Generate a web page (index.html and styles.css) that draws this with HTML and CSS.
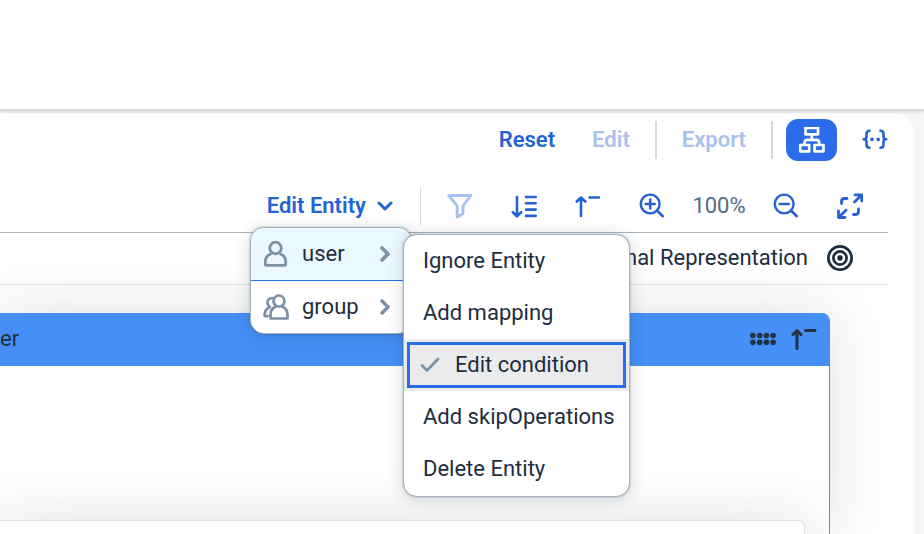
FILE: index.html
```html
<!DOCTYPE html>
<html lang="en">
<head>
<meta charset="utf-8">
<meta name="viewport" content="width=device-width, initial-scale=1">
<title>Edit Entity</title>
<link rel="stylesheet" href="styles.css">
</head>
<body>
<header class="topbar"></header>
<main class="panel">
  <div class="toolbar actions">
    <button class="text-button" type="button">Reset</button>
    <button class="text-button" type="button" disabled>Edit</button>
    <span class="separator strong"></span>
    <button class="text-button" type="button" disabled>Export</button>
    <span class="separator strong"></span>
    <button class="view-button selected" type="button" aria-label="Graphical view">
      <svg class="icon" viewBox="0 0 26 26"><g fill="none" stroke="currentColor" stroke-width="2.700" stroke-linejoin="round"><rect x="6.500" y="0.800" width="12.500" height="6.500"/><rect x="1.200" y="18" width="9" height="6.300"/><rect x="15.500" y="18" width="9" height="6.300"/><path d="M12.800 7.300v5.500M5.500 18v-2.200q0-3 3-3h8.700q3 0 3 3V18"/></g></svg>
    </button>
    <button class="view-button code" type="button" aria-label="JSON view">
      <svg class="icon" viewBox="0 0 26 26"><path d="M7.500 3.800C5.500 3.800 4.500 5 4.500 7v2.500C4.500 11.500 3.500 12.300 1.700 12.300c1.800 0 2.800 1 2.800 2.700V17.500c0 2 1 3.200 3 3.200M18.500 3.800c2 0 3 1.200 3 3.200v2.500c0 2 1 2.800 2.800 2.800-1.800 0-2.800 1-2.800 2.700V17.500c0 2-1 3.200-3 3.200" fill="none" stroke="currentColor" stroke-width="2.600" stroke-linecap="round" stroke-linejoin="round"/><circle cx="10" cy="12.400" r="1.800" fill="currentColor"/><circle cx="16.200" cy="12.400" r="1.800" fill="currentColor"/></svg>
    </button>
  </div>

  <div class="toolbar tools">
    <div class="entity">
      <button class="text-button entity-button" type="button" aria-haspopup="menu" aria-expanded="true">Edit Entity
        <svg class="caret" viewBox="0 0 16 10"><path d="M2 2l6 6 6-6" fill="none" stroke="currentColor" stroke-width="3" stroke-linecap="round" stroke-linejoin="round"/></svg>
      </button>
      <ul class="menu entity-menu">
        <li>
          <button class="menu-item active" type="button">
            <svg class="icon" viewBox="0 0 26 26"><g fill="none" stroke="currentColor" stroke-width="2.800" stroke-linejoin="round"><circle cx="12.500" cy="7" r="5.800"/><path d="M8.500 12.500C4.500 14 2.300 17 2.300 20.500V23.500q0 .8.800.8h18.800q.8 0 .8-.8v-3c0-3.500-2.200-6.500-6.200-8"/></g></svg>
            <span class="label">user</span>
            <svg class="arrow" viewBox="0 0 12 18"><path d="M3 3l6 6-6 6" fill="none" stroke="currentColor" stroke-width="3.600" stroke-linecap="round" stroke-linejoin="round"/></svg>
          </button>
        </li>
        <li>
          <button class="menu-item" type="button">
            <svg class="icon" viewBox="0 0 26 26"><g fill="none" stroke="currentColor" stroke-width="2.700" stroke-linejoin="round" stroke-linecap="round"><circle cx="16" cy="7" r="5.500"/><path d="M13 12.500C9.500 14 7.500 17 7.500 20.500V24q0 .5.500.5h16q.5 0 .5-.5v-3.500c0-3.500-2-6.500-5.500-8M9.500 4C6 4 4.500 6.500 4.500 8.500c0 2 1 3.500 2.500 4.500C3 15 1.500 17.500 1.500 21q0 1.200 1 1.200h2"/></g></svg>
            <span class="label">group</span>
            <svg class="arrow" viewBox="0 0 12 18"><path d="M3 3l6 6-6 6" fill="none" stroke="currentColor" stroke-width="3.600" stroke-linecap="round" stroke-linejoin="round"/></svg>
          </button>
        </li>
      </ul>
      <ul class="menu action-menu">
        <li><button class="menu-item" type="button">Ignore Entity</button></li>
        <li><button class="menu-item" type="button">Add mapping</button></li>
        <li>
          <button class="menu-item focused" type="button">
            <svg class="check" viewBox="0 0 20 16"><path d="M2 8.500L7 13.500 18 2" fill="none" stroke="currentColor" stroke-width="2.800" stroke-linecap="round" stroke-linejoin="round"/></svg>
            Edit condition
          </button>
        </li>
        <li><button class="menu-item" type="button">Add skipOperations</button></li>
        <li><button class="menu-item" type="button">Delete Entity</button></li>
      </ul>
    </div>
    <span class="separator"></span>
    <button class="icon-button" type="button" aria-label="Filter" disabled>
      <svg class="icon" viewBox="0 0 26 26"><path d="M1.800 2.500h22L16 13v7.500L10.200 24V13z" fill="none" stroke="currentColor" stroke-width="2.900" stroke-linejoin="round"/></svg>
    </button>
    <button class="icon-button" type="button" aria-label="Expand all">
      <svg class="icon" viewBox="0 0 26 26"><path d="M6 4v19M1.800 19.300l4.200 4 4.200-4M15 4h9.700M15 10.300h9.700M15 16.600h9.700M15 22.900h9.700" fill="none" stroke="currentColor" stroke-width="2.600" stroke-linecap="round" stroke-linejoin="round"/></svg>
    </button>
    <button class="icon-button" type="button" aria-label="Collapse all">
      <svg class="icon" viewBox="0 0 26 26"><path d="M6 23V4.500M1.800 8.500L6 4.500 10.200 8.500M14.500 4.500h9.500" fill="none" stroke="currentColor" stroke-width="2.600" stroke-linecap="round" stroke-linejoin="round"/></svg>
    </button>
    <button class="icon-button" type="button" aria-label="Zoom in">
      <svg class="icon" viewBox="0 0 26 26"><path d="M18 17.500l5.800 5.700M11.200 6.500v9M6.700 11h9" fill="none" stroke="currentColor" stroke-width="2.600" stroke-linecap="round"/><circle cx="11.200" cy="11" r="9.400" fill="none" stroke="currentColor" stroke-width="2.400"/></svg>
    </button>
    <span class="zoom-level">100%</span>
    <button class="icon-button" type="button" aria-label="Zoom out">
      <svg class="icon" viewBox="0 0 26 26"><path d="M18 17.500l5.800 5.700M6.700 11h9" fill="none" stroke="currentColor" stroke-width="2.600" stroke-linecap="round"/><circle cx="11.200" cy="11" r="9.400" fill="none" stroke="currentColor" stroke-width="2.400"/></svg>
    </button>
    <button class="icon-button" type="button" aria-label="Full screen">
      <svg class="icon" viewBox="0 0 26 26"><path d="M18 1.800h6.800V8M24.500 2l-7 7M8 24.500H1.500V18M1.800 24.200L9 17.200M4.500 10.500V8.500q0-3 3-3h2.500M21.500 16v2.500q0 3-3 3H16.500" fill="none" stroke="currentColor" stroke-width="2.800" stroke-linecap="round" stroke-linejoin="round"/></svg>
    </button>
  </div>

  <div class="view-title">
    <span>nal Representation</span>
    <svg class="icon" viewBox="0 0 26 26"><g fill="none" stroke="currentColor"><circle cx="13" cy="13" r="11.600" stroke-width="2.700"/><circle cx="13" cy="13" r="6.600" stroke-width="2.700"/></g><circle cx="13" cy="13" r="2.700" fill="currentColor"/></svg>
  </div>

  <section class="card">
    <header class="card-header">
      <span class="card-name">er</span>
      <svg class="icon" viewBox="0 0 26 26"><g fill="currentColor"><circle cx="2.900" cy="9.500" r="2.800"/><circle cx="9.700" cy="9.500" r="2.800"/><circle cx="16.400" cy="9.500" r="2.800"/><circle cx="23.100" cy="9.500" r="2.800"/><circle cx="2.900" cy="16.300" r="2.800"/><circle cx="9.700" cy="16.300" r="2.800"/><circle cx="16.400" cy="16.300" r="2.800"/><circle cx="23.100" cy="16.300" r="2.800"/></g></svg>
      <svg class="icon" viewBox="0 0 26 26"><path d="M6 22.500V4.500M2 8.500L6 4.500 10 8.500M14.500 4.500h9.500" fill="none" stroke="currentColor" stroke-width="3" stroke-linecap="round" stroke-linejoin="round"/></svg>
    </header>
    <div class="card-body">
      <div class="inner-card"></div>
    </div>
  </section>
</main>
</body>
</html>
```

FILE: styles.css
```css
* {
  box-sizing: border-box;
}

body {
  margin: 0;
  height: 100vh;
  display: flex;
  flex-direction: column;
  overflow: hidden;
  background: #f5f6f7;
  color: #1d2d3e;
  font: 22px/28px Roboto, "Noto Sans", sans-serif;
}

button {
  margin: 0;
  padding: 0;
  border: 0;
  background: none;
  color: #2563d4;
  font: inherit;
}

button:disabled {
  color: #a9c1ee;
}

svg {
  display: block;
  flex: none;
}

.icon {
  width: 26px;
  height: 26px;
}

.topbar {
  position: relative;
  flex: none;
  height: 111px;
  background: #fff;
  border-bottom: 2px solid #d9d9db;
  box-shadow: 0 1px 3px rgba(34, 53, 72, 0.16);
}

.panel {
  flex: 1;
  min-height: 0;
  display: flex;
  flex-direction: column;
  margin: 2px 10px 0 0;
  background: #fff;
  border-radius: 0 20px 0 0;
}

.toolbar {
  flex: none;
  display: flex;
  align-items: center;
  justify-content: flex-end;
  gap: 12px;
  margin-right: 26px;
}

.actions {
  gap: 13px;
  height: 54px;
  margin-bottom: 13px;
}

.tools {
  height: 53px;
  padding-right: 12px;
  border-bottom: 1px solid #a8b2bd;
}

.text-button {
  padding: 0 12px;
  font-weight: 600;
}

.separator {
  width: 1px;
  height: 38px;
  background: #d9d9d9;
}

.tools .separator {
  margin-right: 1px;
}

.separator.strong {
  width: 2px;
}

.view-button {
  display: flex;
  align-items: center;
  justify-content: center;
  width: 51px;
  height: 42px;
  border-radius: 12px;
}

.view-button.selected {
  background: #2b6cea;
  color: #fff;
}

.view-button.code {
  width: 38px;
  justify-content: flex-end;
}

.icon-button {
  display: flex;
  justify-content: center;
  width: 52px;
}

.zoom-level {
  width: 58px;
  text-align: center;
  color: #556b82;
}

.entity {
  position: relative;
}

.entity-button {
  display: flex;
  align-items: center;
  gap: 11px;
  padding-right: 15px;
}

.caret {
  width: 16px;
  height: 10px;
}

.menu {
  position: absolute;
  z-index: 2;
  margin: 0;
  padding: 0;
  list-style: none;
  overflow: hidden;
  background: #fff;
  border: 1px solid #a8b2bd;
  border-radius: 14px;
  box-shadow: 0 2px 16px rgba(34, 53, 72, 0.2), 0 0 2px rgba(34, 53, 72, 0.4);
}

.entity-menu {
  top: 35px;
  right: -4px;
  width: 162px;
}

.action-menu {
  top: 42px;
  left: calc(100% - 5px);
  z-index: 3;
  width: 227px;
  padding-bottom: 1px;
}

.menu-item {
  display: flex;
  align-items: center;
  width: 100%;
  height: 52px;
  padding: 0 19px;
  color: #1d2d3e;
  text-align: left;
  white-space: nowrap;
}

.menu-item .icon,
.menu-item .arrow,
.menu-item .check {
  color: #7b91a8;
}

.entity-menu .menu-item {
  gap: 13px;
  padding: 0 20px 0 12px;
}

.menu-item.active {
  height: 53px;
  background: #ebf8ff;
  border-bottom: 1px solid #2b6cea;
}

.label {
  flex: 1;
}

.arrow {
  width: 12px;
  height: 18px;
}

.menu-item.focused {
  gap: 15px;
  padding: 0 16px;
  background: #eaebed;
  outline: 3px solid #2b6cea;
  outline-offset: -6px;
}

.check {
  width: 20px;
  height: 16px;
}

.view-title {
  flex: none;
  display: flex;
  align-items: center;
  justify-content: flex-end;
  gap: 19px;
  height: 52px;
  margin-right: 26px;
  padding: 0 35px 2px 0;
  border-bottom: 1px solid #e2e3e4;
}

.card {
  flex: 1;
  min-height: 0;
  display: flex;
  flex-direction: column;
  margin: 28px 84px 0 0;
  border-right: 1px solid #458ff7;
  border-radius: 0 8px 0 0;
  background: #fff;
  box-shadow: 0 0 60px rgba(0, 0, 0, 0.13);
}

.card-header {
  flex: none;
  display: flex;
  align-items: center;
  gap: 15px;
  height: 53px;
  padding: 0 12px 2px 0;
  border-radius: 0 7px 0 0;
  background: #458ff7;
  color: #223040;
}

.card-name {
  flex: 1;
}

.card-body {
  flex: 1;
  min-height: 0;
  display: flex;
  padding: 154px 24px 0 0;
  overflow: hidden;
}

.inner-card {
  flex: 1;
  min-height: 120px;
  border: 1px solid #e1e1e1;
  border-width: 1px 1px 0 0;
  border-radius: 0 7px 0 0;
  background: #fff;
  box-shadow: 0 0 60px rgba(0, 0, 0, 0.13);
}
```
